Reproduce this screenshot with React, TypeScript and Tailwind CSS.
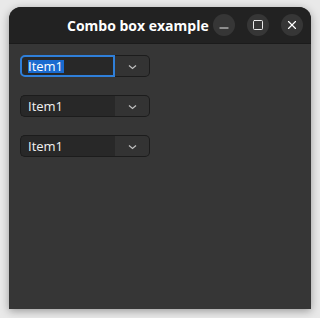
import { X, Minus, Square } from "lucide-react";

function Combo({ focused }: { focused?: boolean }) {
  return (
    <div className="flex h-[22px] w-[130px]">
      <div
        className={
          focused
            ? "flex w-[95px] items-center rounded-l-[5px] border-2 border-[#2f7fd9] bg-[#282828] pl-[6px]"
            : "flex w-[95px] items-center rounded-l-[5px] border border-r-0 border-[#1c1c1c] bg-[#282828] pl-[7px]"
        }
      >
        <span
          className={
            focused
              ? "bg-[#1a6bd0] pr-[1px] text-[13px] leading-[13px] text-white"
              : "text-[13px] leading-[13px] text-[#f2f2f2]"
          }
        >
          Item1
        </span>
      </div>
      <div className="flex flex-1 items-center justify-center rounded-r-[5px] border border-l-0 border-[#1c1c1c] bg-[#333333]">
        <svg width="9" height="6" viewBox="0 0 9 6" className="mt-[1px]">
          <path d="M1 1.5 L4.5 4.5 L8 1.5" stroke="#bdbdbd" strokeWidth="1.3" fill="none" />
        </svg>
      </div>
    </div>
  );
}

export default function App() {
  return (
    <div
      className="flex h-[318px] w-[320px] bg-[#e9e9e9] pl-[9px] pt-[7px]"
      style={{ fontFamily: '"Open Sans", "Noto Sans", sans-serif' }}
    >
      <div className="flex h-[302px] w-[302px] flex-col overflow-hidden rounded-t-[12px] bg-[#363636] shadow-[0_2px_8px_rgba(0,0,0,0.35)]">
        <div className="relative flex h-[37px] items-center border-b border-[#1b1b1b] bg-[#222222]">
          <span className="ml-[58px] text-[14px] font-bold text-white">
            Combo box example
          </span>
          <div className="ml-auto mr-[8px] flex gap-[12px]">
            <div className="flex h-[22px] w-[22px] items-center justify-center rounded-full bg-[#363636]">
              <Minus size={14} strokeWidth={1.5} color="#ffffff" className="mt-[6px]" />
            </div>
            <div className="flex h-[22px] w-[22px] items-center justify-center rounded-full bg-[#363636]">
              <Square size={12} strokeWidth={1.8} color="#ffffff" />
            </div>
            <div className="flex h-[22px] w-[22px] items-center justify-center rounded-full bg-[#363636]">
              <X size={14} strokeWidth={2} color="#ffffff" />
            </div>
          </div>
        </div>
        <div className="flex flex-col gap-[18px] pl-[11px] pt-[11px]">
          <Combo focused />
          <Combo />
          <Combo />
        </div>
      </div>
    </div>
  );
}
